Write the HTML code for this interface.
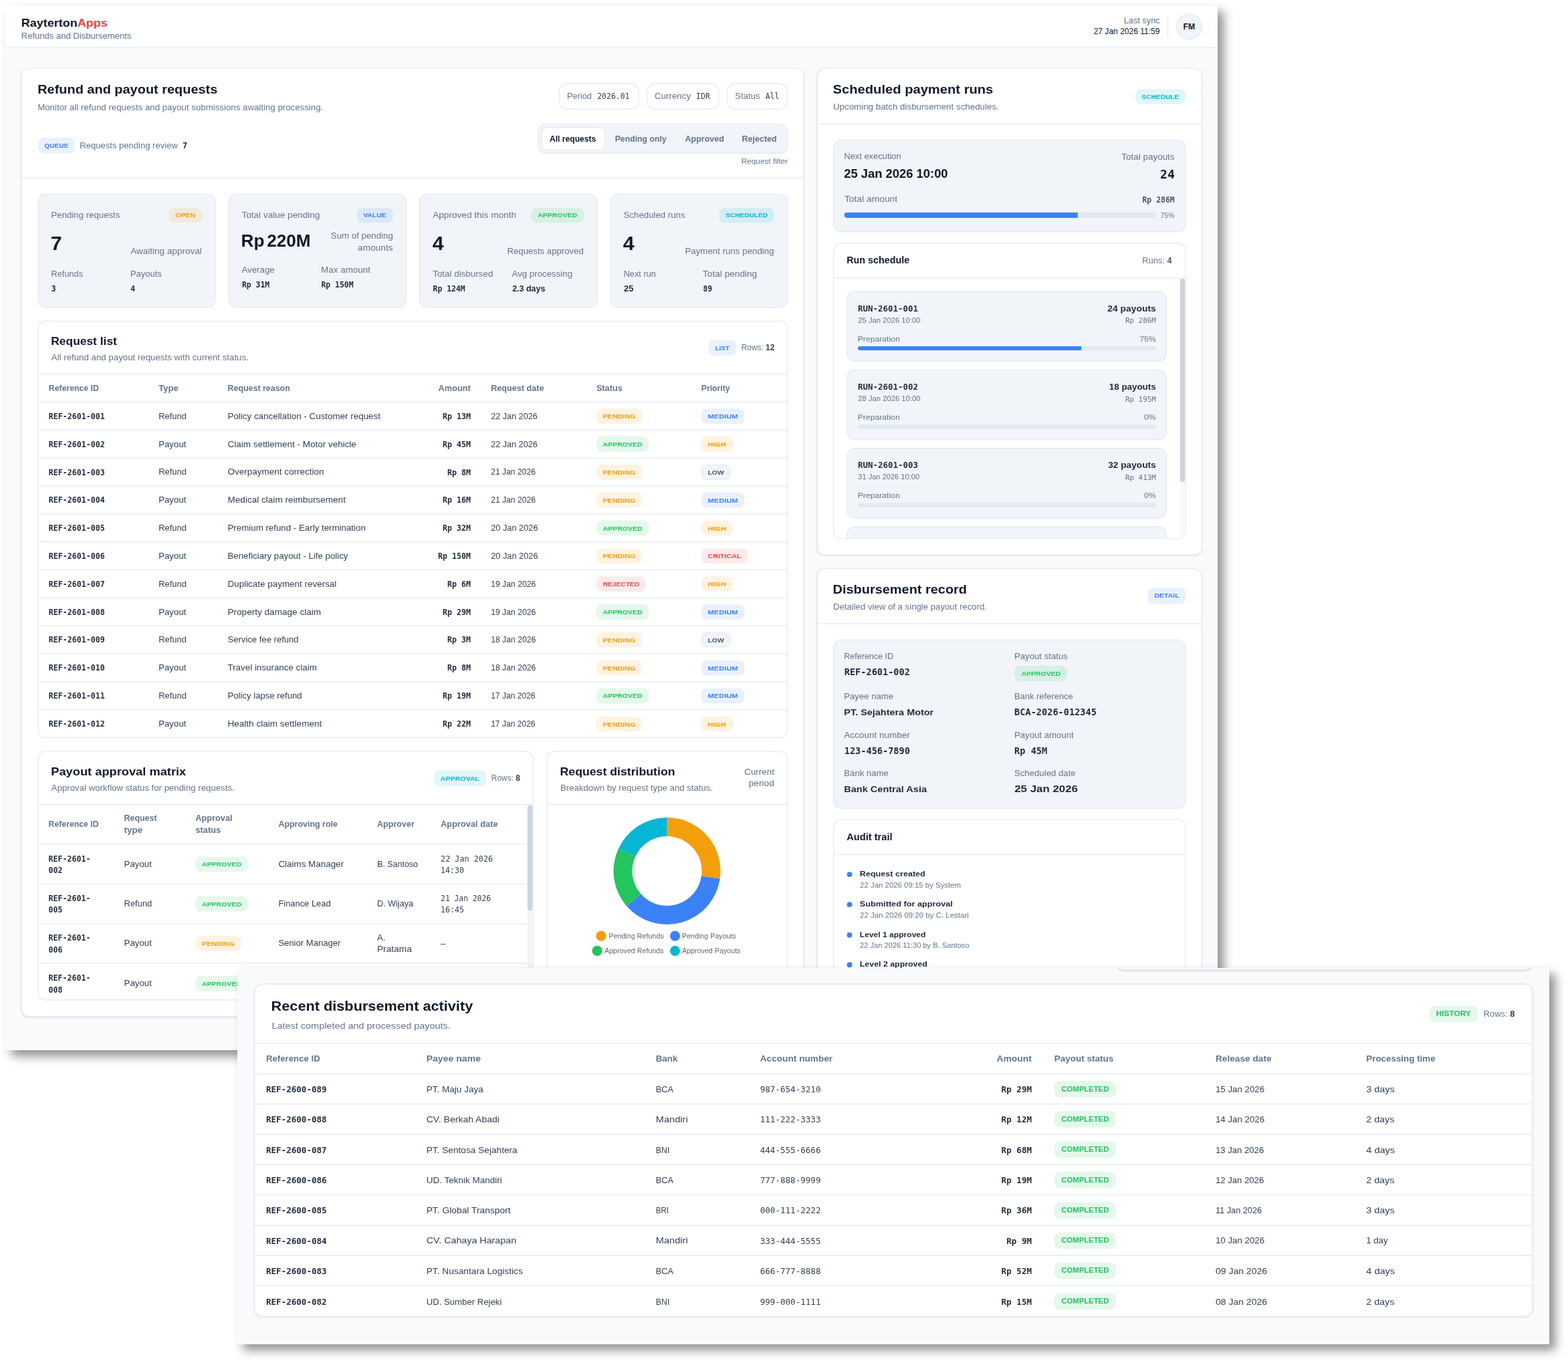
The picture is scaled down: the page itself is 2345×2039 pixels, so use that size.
<!DOCTYPE html>
<html lang="en"><head><meta charset="utf-8"><title>RaytertonApps - Refunds and Disbursements</title>
<style>
*{box-sizing:border-box;margin:0;padding:0}
html,body{width:2345px;height:2039px;background:#fff;overflow:hidden}
body{position:relative;font-family:"Liberation Sans",sans-serif;color:#334155;font-size:12px;line-height:1.3}
.mono{font-family:"DejaVu Sans Mono","Liberation Mono",monospace;font-size:10.25px;letter-spacing:0}
.b{font-weight:700;color:#1e293b}
.panel{position:absolute;background:#f8fafc;overflow:hidden;box-shadow:9px 9px 14px rgba(0,0,0,.43)}
.p1{left:8px;top:8px;width:1813px;height:1563px}
.p2{left:355px;top:1448px;width:1962px;height:563px}
.page{position:absolute;left:0;top:0;width:1600px;transform-origin:0 0;zoom:4;transform-style:preserve-3d}
.p1 .page{height:1380px;transform:translate(.075px,.125px) scale(0.2832)}
.p2 .page{height:460px;transform:scale(0.3065625)}

/* header */
.hdr{position:absolute;left:0;top:0;width:1600px;height:55.19px;background:#fff;border-bottom:1px solid #e2e8f0}
.logo{position:absolute;left:20.70px;top:12.43px;font-size:14.5px;line-height:20px;font-weight:700;color:#0f172a;white-space:nowrap}
.logo i{font-style:normal;color:#ef4444}
.bsub{position:absolute;left:20.65px;top:31.71px;font-size:11px;line-height:16px;color:#64748b;white-space:nowrap}
.s1{position:absolute;right:76.08px;top:11.93px;font-size:11px;line-height:16px;color:#64748b;white-space:nowrap}
.s2{position:absolute;right:76.08px;top:25.62px;font-size:11px;line-height:16px;color:#0f172a;white-space:nowrap}
.vdiv{position:absolute;left:1534.10px;top:12.45px;width:1px;height:30.81px;background:#e2e8f0}
.av{position:absolute;left:1545.26px;top:10.61px;width:34.4px;height:34.4px;border-radius:50%;background:#f1f5f9;border:1px solid #e2e8f0;font-size:10.5px;font-weight:700;color:#0f172a;text-align:center;line-height:32.4px}

/* cards */
.card{position:absolute;background:#fff;border:1px solid #e2e8f0;border-radius:10.5px;box-shadow:0 1px 2px rgba(15,23,42,.09)}
.card.in{box-shadow:none;overflow:hidden}
.A{ left:20.69px;top:82.48px;width:1033.57px;height:1252.94px }
.B{ left:1071.36px;top:82.48px;width:508.33px;height:643.21px }
.C{ left:1071.36px;top:742.70px;width:508.33px;height:751.00px }
.h1{font-size:16.2px;line-height:22px;font-weight:700;color:#0f172a;white-space:nowrap}
.h2{font-size:14px;line-height:20px;font-weight:700;color:#0f172a;white-space:nowrap}
.h3{font-size:12.4px;line-height:18px;font-weight:700;color:#0f172a;white-space:nowrap}
.sub{font-size:11px;line-height:16px;color:#64748b;white-space:nowrap}
.abs{position:absolute}
.fx{display:inline-block;transform-origin:0 50%;white-space:pre}
.av .fx{transform-origin:50% 50%}
.s1 .fx,.s2 .fx,.rf .fx,.t-note .fx,.cp .fx,.ra .fx,.rows .fx,.r .fx,.rl .c4 .fx,.hs .c5 .fx{transform-origin:100% 50%}

.chip{display:inline-block;height:20.9px;line-height:21.6px;padding:0 8.6px;border-radius:7px;font-size:8.4px;font-weight:700;letter-spacing:0;white-space:nowrap;vertical-align:middle;text-align:center;overflow:visible}
.chip .fx{transform-origin:50% 50%}
.chip.bd{height:20.1px;line-height:20.8px;margin-top:.4px}
.c-blue{background:rgba(59,130,246,.11);color:#3b82f6}
.c-orange{background:rgba(245,158,11,.12);color:#f59e0b}
.c-green{background:rgba(34,197,94,.12);color:#22c55e}
.c-cyan{background:rgba(6,182,212,.12);color:#06b6d4}
.c-red{background:rgba(239,68,68,.11);color:#ef4444}
.c-gray{background:#f1f5f9;color:#475569;border:1px solid #e2e8f0;line-height:18.8px !important;padding:0 7.6px}

/* card A header */
.ch{position:absolute;left:0;top:0;width:100%;height:144.51px;border-bottom:1px solid #e2e8f0}
.ch .h1{position:absolute;left:20.46px;top:16.34px}
.ch .sub{position:absolute;left:20.67px;top:42.77px}
.queue{position:absolute;left:21.30px;top:90.69px;white-space:nowrap;height:20.92px;line-height:20.92px}
.queue .chip{position:absolute;left:0;top:0;height:100%;line-height:inherit;width:48.38px;padding:0}
.q1{position:absolute;left:55.09px;top:0;font-size:11px;color:#64748b}
.q2{position:absolute;left:190.78px;top:0;font-size:10.6px}
.pill{position:absolute;border:1px solid #e2e8f0;border-radius:10.5px;font-size:11px;line-height:16px;color:#64748b;background:#fff;white-space:nowrap}
.pill>span,.pill>b{position:absolute;top:7.82px}
.pill b{font-weight:400;color:#334155;font-size:10.1px}
.pl1{ left:708.75px;top:19.04px;width:105.78px;height:34.81px }
.pl2{ left:824.65px;top:19.04px;width:95.63px;height:34.81px }
.pl3{ left:930.41px;top:19.04px;width:80.71px;height:34.81px }
.pl1>span{left:9.82px} .pl1>b{left:49.76px}
.pl2>span{left:9.65px} .pl2>b{left:64.41px}
.pl3>span{left:9.82px} .pl3>b{left:50.02px}
.seg{position:absolute;left:681.03px;top:72.18px;width:330.10px;height:39.93px;background:#f1f5f9;border:1px solid #e2e8f0;border-radius:10.5px;white-space:nowrap;font-size:10.8px;font-weight:700;color:#64748b}
.seg u{position:absolute;left:3.59px;top:3.68px;width:84.33px;height:30.66px;background:#fff;border:1px solid #e2e8f0;border-radius:8px}
.seg>span{position:absolute;top:10.93px;line-height:16px}
.seg>span.on{color:#0f172a}
.seg>span:nth-of-type(1){left:14.51px}
.seg>span:nth-of-type(2){left:100.76px}
.seg>span:nth-of-type(3){left:193.41px}
.seg>span:nth-of-type(4){left:268.40px}
.rf{position:absolute;right:20.51px;top:114.87px;font-size:10.4px;line-height:14px;color:#64748b;white-space:nowrap}

/* tiles */
.tile{position:absolute;background:#f1f5f9;border:1px solid #e2e8f0;border-radius:10.5px}
.tl0{ left:20.80px;top:164.70px;width:234.85px;height:150.89px } .tl1{ left:272.48px;top:164.70px;width:235.46px;height:150.89px } .tl2{ left:524.60px;top:164.70px;width:235.11px;height:150.89px } .tl3{ left:776.54px;top:164.70px;width:234.58px;height:150.89px }
.t-label{font-size:11px;line-height:16px;color:#64748b;white-space:nowrap}
.tile>.t-label{position:absolute;left:16.71px;top:19.47px}
.tile>.chip{position:absolute;right:17.24px;top:17.77px;height:19.77px;line-height:19.77px}
.t-big{position:absolute;left:17.69px;font-weight:700;color:#0f172a;white-space:nowrap}
.big1{font-size:26px;line-height:32px;top:48.56px;margin-left:-1.6px}
.big2{font-size:23.3px;line-height:28px;top:47.08px;margin-left:-1.8px;word-spacing:-3px}
.t-note{position:absolute;right:17.16px;top:67.50px;font-size:11px;line-height:15.45px;color:#64748b;text-align:right;white-space:nowrap}
.tl1 .t-note{top:47.20px}
.t-sub{position:absolute;left:16.71px;top:96.80px;width:220px}
.tl1 .t-sub{top:91.68px}
.t-sub>div{position:absolute;left:0;top:0}
.t-sub>div+div{left:104.61px}
.t-sl{font-size:11px;line-height:16px;color:#64748b;white-space:nowrap}
.t-sv{position:absolute;left:.3px;top:19.83px;font-size:10.1px;line-height:16px;font-weight:700;color:#1e293b;white-space:nowrap}
.t-sv.sv-s{font-family:"Liberation Sans",sans-serif;font-size:10.8px;top:19.58px}

/* inner card header */
.ch2{position:relative;border-bottom:1px solid #e2e8f0}
.RL .ch2{height:70.18px}
.PM .ch2,.RD .ch2{height:70.27px}
.ch2 .h2{position:absolute;left:16.60px;top:16.16px}
.ch2 .sub{position:absolute;left:16.92px;top:39.95px}
.ch2-r{position:absolute;right:16.6px;top:24.57px;height:20.9px;white-space:nowrap;line-height:20.9px}
.ch2-r .chip{vertical-align:top}
.rows{margin-left:7px;font-size:10.5px;color:#64748b;vertical-align:top}
.rows b{color:#334155;font-weight:700}
.rows b.nb{font-weight:400;color:#64748b}
.cp{position:absolute;right:16.89px;top:19.30px;text-align:right;font-size:11px;line-height:15.1px;color:#64748b}

.RL{ left:20.80px;top:332.42px;width:990.32px;height:551.14px }
.PM{ left:20.80px;top:900.75px;width:654.43px;height:329.21px }
.RD{ left:692.77px;top:900.75px;width:318.36px;height:329.21px }

/* tables */
.tbl{position:relative}
.tr{position:relative;height:36.93px;border-bottom:1px solid #e2e8f0;font-size:11px;color:#334155}
.tr:last-child{border-bottom:0}
.tr>span{position:absolute;top:0;height:100%;display:flex;align-items:center;white-space:nowrap}
.tr.th{font-weight:700;color:#64748b;font-size:10.6px}
.tr .mono{font-size:10.25px;padding-top:1.3px}
.rl .tr.th{height:36.86px}
.rl .c1{left:13.5px}.rl .c2{left:158.5px}.rl .c3{left:249.8px}.rl .c4{right:417.70px}.rl .c5{left:597.2px}.rl .c6{left:736.5px}.rl .c7{left:875.0px}
.pm .tr{height:52.35px;line-height:15.6px}
.pm .tr.th{height:52.44px}
.pm .tr>span{white-space:nowrap;flex-direction:column;justify-content:center;align-items:flex-start}
.pm em{display:block;font-style:normal}
.pm .c1{left:13.3px}.pm .c2{left:113px}.pm .c3{left:207.2px}.pm .c4{left:316.8px}.pm .c5{left:447.1px}.pm .c6{left:531px}
.pmwrap{position:relative;height:258px;overflow:hidden}
.sbar{position:absolute;right:0;top:0;width:7px;height:100%;background:#f1f5f9}
.sbar i{position:absolute;left:0;top:0;width:7px;height:139.5px;border-radius:4px;background:#cbd5e1}

/* donut */
.donut{position:absolute;left:85.78px;top:85.43px}
.lg{position:absolute;left:0;width:100%;height:14px;font-size:9.45px;color:#666;line-height:14px;white-space:nowrap}
.lg i{position:absolute;top:.3px;width:13.4px;height:13.4px;border-radius:50%;margin-left:-.2px}
.lg>span{position:absolute;top:0}
.l1{top:236.23px}
.l2{top:255.92px}
.l1 i:nth-of-type(1){left:64.24px}
.l1>span:nth-of-type(1){left:81.07px}
.l1 i:nth-of-type(2){left:161.87px}
.l1>span:nth-of-type(2){left:177.64px}
.l2 i:nth-of-type(1){left:59.03px}
.l2>span:nth-of-type(1){left:75.24px}
.l2 i:nth-of-type(2){left:161.87px}
.l2>span:nth-of-type(2){left:177.64px}

/* card B */
.chb{position:absolute;left:0;top:0;width:100%;height:73.18px;border-bottom:1px solid #e2e8f0}
.C .chb{height:73.09px}
.chb .h1{position:absolute;left:19.84px;top:16.08px}
.chb .sub{position:absolute;left:20.14px;top:42.33px}
.C .chb .h1{top:16.08px}
.C .chb .sub{top:42.33px}
.chb>.chip{position:absolute;right:20.69px;top:26.78px;height:19.86px;line-height:19.86px}
.C .chb>.chip{top:24.92px;height:21.63px;line-height:21.63px}
.NE{ left:20.27px;top:93.54px;width:465.69px;height:122.03px }
.NE>span{position:absolute;white-space:nowrap}
.NE>.ne1{left:13.35px;top:13.11px}
.ne-v{font-size:15.6px;line-height:22px;font-weight:700;color:#0f172a}
.NE>.ne2{left:13.25px;top:33.59px}
.NE>.ne3{left:auto;right:14.07px;top:13.47px}
.NE>.ne4{right:13.71px;top:33.54px;font-size:16px;line-height:22px;color:#0f172a}
.NE>.ne5{left:13.75px;top:69.17px}
.NE>.ne6{right:13.89px;top:70.45px;font-size:10.1px;line-height:16px;color:#475569}
.NE>.ne7{position:absolute;left:13.54px;top:95.10px;width:411.02px;height:7.15px}
.NE>.ne8{right:13.98px;top:91.77px;font-size:9.8px;line-height:14px;color:#64748b}
.bar{border-radius:4px;background:#e2e8f0;overflow:hidden}
.bar i{display:block;height:100%;background:#3b82f6}

.RS{ left:20.27px;top:229.58px;width:465.69px;height:391.18px }
.ch3{position:relative;height:46.17px;border-bottom:1px solid #e2e8f0}
.AT .ch3{height:46.26px}
.ch3 .h3{position:absolute;left:16.79px;top:13.11px}
.AT .ch3 .h3{top:13.46px}
.runs{position:absolute;right:17.51px;top:14.51px;line-height:16px;font-size:10.8px;color:#64748b;white-space:nowrap}
.runs b{color:#475569;font-weight:700}
.run{position:absolute;background:#f1f5f9;border:1px solid #e2e8f0;border-radius:10.5px}
.rn0{ left:16.83px;top:62.91px;width:422.79px;height:93.16px } .rn1{ left:16.83px;top:166.42px;width:422.79px;height:93.16px } .rn2{ left:16.83px;top:269.92px;width:422.79px;height:93.16px } .rn3{ left:16.83px;top:373.43px;width:422.79px;height:93.16px }
.run>span{position:absolute;white-space:nowrap}
.run-id{left:13.82px;top:14.58px;font-size:11px !important;line-height:15px}
.run-date{left:13.92px;top:29.65px;font-size:10.2px;line-height:15px;color:#64748b}
.run-n{right:13.62px;top:14.58px;font-size:11px;line-height:15px;font-weight:700;color:#1e293b}
.run-amt{right:13.45px;top:30.43px;font-size:9.6px !important;line-height:15px;color:#64748b}
.run-p{left:13.62px;top:54.91px;font-size:10.2px;line-height:14px;color:#64748b}
.run-pc{right:13.62px;top:54.91px;font-size:10.2px;line-height:14px;color:#64748b}
.run .bar{position:absolute;left:13.71px;top:71.89px;width:393.54px;height:5.38px}
.sbar2{position:absolute;left:457.13px;top:46.17px;width:6.18px;bottom:0;background:#f8fafc}
.sbar2 i{position:absolute;left:0;top:0;width:100%;height:269.07px;border-radius:4px;background:#cbd5e1}

/* card C */
.DT{ left:20.27px;top:93.28px;width:465.69px;height:223.46px }
.DT>span{position:absolute;white-space:nowrap}
.DT>.dl{left:13.35px}
.DT>.dl.c2x{left:238.11px}
.DT>.fv{left:13.73px;font-size:12px;line-height:18px;color:#1e293b}
.DT>.fv.c2x{left:238.31px}
.DT>.fv.mono{font-size:12px}
.DT>.fv.fs{font-weight:700;font-size:11.8px;left:13.25px}
.DT>.fv.fd{font-size:12.8px;left:238.31px}
.DT>.dl.r1{top:13.11px} .DT>.r1v{top:33.31px}
.DT>.dl.r2{top:66.61px} .DT>.r2v{top:85.92px}
.DT>.dl.r3{top:117.19px} .DT>.r3v{top:137.30px}
.DT>.dl.r4{top:167.86px} .DT>.r4v{top:187.44px}
.DT>.chip{position:absolute;left:238.64px;top:34.10px;height:19.91px;line-height:19.91px;width:69.39px;padding:0}
.AT{ left:20.27px;top:330.48px;width:465.69px;height:242.97px }
.au{position:absolute;left:17.10px;top:0}
.au0{top:74.62px} .au1{top:114.39px} .au2{top:154.69px} .au3{top:193.93px}
.au i{position:absolute;left:0;top:-6.10px;width:7px;height:7px;border-radius:50%;background:#3b82f6}
.au-t{position:absolute;left:17.00px;top:-11.10px;font-size:10.4px;line-height:15px;font-weight:700;color:#1e293b;white-space:nowrap}
.au-s{position:absolute;left:17.20px;top:4.14px;font-size:10px;line-height:14px;color:#64748b;white-space:nowrap}

/* panel 2 */
.sliver{position:absolute;left:1071.36px;top:-40px;width:508.33px;height:42.62px;background:#fff;border:1px solid #e2e8f0;border-radius:10.5px;box-shadow:0 1px 2.5px rgba(15,23,42,.14)}
.H{ left:20.62px;top:19.32px;width:1559.41px;height:406.22px;overflow:hidden}
.H .ch2{height:72.42px}
.H .h1{position:absolute;left:19.75px;top:15.51px}
.H .sub{position:absolute;left:20.28px;top:42.08px}
.H .ch2-r{right:21.19px;top:25.92px;height:19.98px;line-height:19.98px}
.H .ch2-r .chip{height:19.98px;line-height:19.98px}
.hs .tr{height:36.95px}
.hs .tr.th{height:36.94px}
.hs .c1{left:13.35px}.hs .c2{left:208.85px}.hs .c3{left:488.57px}.hs .c4{left:615.84px}.hs .c5{right:610.21px}.hs .c6{left:974.67px}.hs .c7{left:1171.27px}.hs .c8{left:1355.09px}
.hs .chip.bd{height:20px;line-height:20px}

</style></head>
<body>
<div class="panel p1"><div class="page">
<div class="hdr">
  <div class="logo"><span class="fx nofit" style="transform:scaleX(1.095)">Rayterton<i>Apps</i></span></div><div class="bsub"><span class="fx" style="transform:scaleX(1.0457)">Refunds and Disbursements</span></div>
  <div class="s1"><span class="fx" style="transform:scaleX(1.0257)">Last sync</span></div><div class="s2"><span class="fx" style="transform:scaleX(0.9661)">27 Jan 2026 11:59</span></div><div class="vdiv"></div><div class="av"><span class="fx" style="transform:scaleX(1.03)">FM</span></div>
</div>
<div class="card A">
  <div class="ch">
    <div class="h1"><span class="fx" style="transform:scaleX(1.0865)">Refund and payout requests</span></div><div class="sub"><span class="fx" style="transform:scaleX(1.065)">Monitor all refund requests and payout submissions awaiting processing.</span></div>
    <div class="queue"><span class="chip c-blue "><span class="fx" style="transform:scaleX(1.0647);margin:0 0.95px">QUEUE</span></span><span class="q1"><span class="fx" style="transform:scaleX(1.0471)">Requests pending review</span></span><span class="q2 mono b">7</span></div>
    <div class="pill pl1"><span class="fx" id="fx-pill-0" style="transform:scaleX(1.0271)">Period</span><b class="mono">2026.01</b></div><div class="pill pl2"><span class="fx" id="fx-pill-1" style="transform:scaleX(1.0669)">Currency</span><b class="mono">IDR</b></div><div class="pill pl3"><span class="fx" id="fx-pill-2" style="transform:scaleX(1.0593)">Status</span><b class="mono">All</b></div>
    <div class="seg"><u></u><span class="on"><span class="fx" style="transform:scaleX(0.9905)">All requests</span></span><span><span class="fx" style="transform:scaleX(1.0049)">Pending only</span></span><span><span class="fx" style="transform:scaleX(1.0262)">Approved</span></span><span><span class="fx" style="transform:scaleX(1.0274)">Rejected</span></span></div>
    <div class="rf"><span class="fx" style="transform:scaleX(1.0018)">Request filter</span></div>
  </div>
  <div class="tile tl0">
  <span class="t-label"><span class="fx" style="transform:scaleX(1.0602)">Pending requests</span></span><span class="chip c-orange "><span class="fx" style="transform:scaleX(1.107);margin:0 1.24px">OPEN</span></span>
  <span class="t-big big1"><span class="fx" style="transform:scaleX(1.03)">7</span></span><span class="t-note"><span class="fx" style="transform:scaleX(1.0867)">Awaiting approval</span></span>
  <div class="t-sub"><div><div class="t-sl"><span class="fx" style="transform:scaleX(1.0232)">Refunds</span></div><div class="t-sv mono">3</div></div><div><div class="t-sl"><span class="fx" style="transform:scaleX(1.0396)">Payouts</span></div><div class="t-sv mono">4</div></div></div>
</div><div class="tile tl1">
  <span class="t-label"><span class="fx" style="transform:scaleX(1.0891)">Total value pending</span></span><span class="chip c-blue "><span class="fx" style="transform:scaleX(1.0986);margin:0 1.34px">VALUE</span></span>
  <span class="t-big big2"><span class="fx" style="transform:scaleX(0.9895)">Rp 220M</span></span><span class="t-note"><span class="fx" style="transform:scaleX(1.0646)">Sum of pending</span><br><span class="fx" style="transform:scaleX(1.1082)">amounts</span></span>
  <div class="t-sub"><div><div class="t-sl"><span class="fx" style="transform:scaleX(1.0659)">Average</span></div><div class="t-sv mono">Rp 31M</div></div><div><div class="t-sl"><span class="fx" style="transform:scaleX(1.0769)">Max amount</span></div><div class="t-sv mono">Rp 150M</div></div></div>
</div><div class="tile tl2">
  <span class="t-label"><span class="fx" style="transform:scaleX(1.0919)">Approved this month</span></span><span class="chip c-green "><span class="fx" style="transform:scaleX(1.1043);margin:0 2.43px">APPROVED</span></span>
  <span class="t-big big1"><span class="fx" style="transform:scaleX(1.03)">4</span></span><span class="t-note"><span class="fx" style="transform:scaleX(1.0581)">Requests approved</span></span>
  <div class="t-sub"><div><div class="t-sl"><span class="fx" style="transform:scaleX(1.0757)">Total disbursed</span></div><div class="t-sv mono">Rp 124M</div></div><div><div class="t-sl"><span class="fx" style="transform:scaleX(1.0643)">Avg processing</span></div><div class="t-sv sv-s"><span class="fx" style="transform:scaleX(1.0208)">2.3 days</span></div></div></div>
</div><div class="tile tl3">
  <span class="t-label"><span class="fx" style="transform:scaleX(1.0605)">Scheduled runs</span></span><span class="chip c-cyan "><span class="fx" style="transform:scaleX(1.0597);margin:0 1.54px">SCHEDULED</span></span>
  <span class="t-big big1"><span class="fx" style="transform:scaleX(1.03)">4</span></span><span class="t-note"><span class="fx" style="transform:scaleX(1.0684)">Payment runs pending</span></span>
  <div class="t-sub"><div><div class="t-sl"><span class="fx" style="transform:scaleX(1.023)">Next run</span></div><div class="t-sv sv-s"><span class="fx" style="transform:scaleX(1.0595)">25</span></div></div><div><div class="t-sl"><span class="fx" style="transform:scaleX(1.0949)">Total pending</span></div><div class="t-sv mono">89</div></div></div>
</div>
  <div class="card in RL">
    <div class="ch2"><div class="h2"><span class="fx" style="transform:scaleX(1.0971)">Request list</span></div><div class="sub"><span class="fx" style="transform:scaleX(1.0645)">All refund and payout requests with current status.</span></div><div class="ch2-r"><span class="chip c-blue "><span class="fx" style="transform:scaleX(1.0533);margin:0 0.47px">LIST</span></span><span class="rows nofit">Rows: <b>12</b></span></div></div>
    <div class="tbl rl"><div class="tr th"><span class="c1"><span class="fx" style="transform:scaleX(1.0213)">Reference ID</span></span><span class="c2"><span class="fx" style="transform:scaleX(1.0917)">Type</span></span><span class="c3"><span class="fx" style="transform:scaleX(1.0355)">Request reason</span></span><span class="c4"><span class="fx" style="transform:scaleX(1.0651)">Amount</span></span><span class="c5"><span class="fx" style="transform:scaleX(1.0517)">Request date</span></span><span class="c6"><span class="fx" style="transform:scaleX(1.0599)">Status</span></span><span class="c7"><span class="fx" style="transform:scaleX(1.0172)">Priority</span></span></div><div class="tr"><span class="c1 mono b">REF-2601-001</span><span class="c2"><span class="fx" style="transform:scaleX(1.0379)">Refund</span></span><span class="c3"><span class="fx" style="transform:scaleX(1.0744)">Policy cancellation - Customer request</span></span><span class="c4 mono b">Rp 13M</span><span class="c5"><span class="fx" style="transform:scaleX(1.0144)">22 Jan 2026</span></span><span class="c6"><span class="chip c-orange bd"><span class="fx" style="transform:scaleX(1.1274);margin:0 2.4px">PENDING</span></span></span><span class="c7"><span class="chip c-blue bd"><span class="fx" style="transform:scaleX(1.1689);margin:0 2.83px">MEDIUM</span></span></span></div><div class="tr"><span class="c1 mono b">REF-2601-002</span><span class="c2"><span class="fx" style="transform:scaleX(1.0654)">Payout</span></span><span class="c3"><span class="fx" style="transform:scaleX(1.0808)">Claim settlement - Motor vehicle</span></span><span class="c4 mono b">Rp 45M</span><span class="c5"><span class="fx" style="transform:scaleX(1.0144)">22 Jan 2026</span></span><span class="c6"><span class="chip c-green bd"><span class="fx" style="transform:scaleX(1.1043);margin:0 2.43px">APPROVED</span></span></span><span class="c7"><span class="chip c-orange bd"><span class="fx" style="transform:scaleX(1.1597);margin:0 1.63px">HIGH</span></span></span></div><div class="tr"><span class="c1 mono b">REF-2601-003</span><span class="c2"><span class="fx" style="transform:scaleX(1.0379)">Refund</span></span><span class="c3"><span class="fx" style="transform:scaleX(1.084)">Overpayment correction</span></span><span class="c4 mono b">Rp 8M</span><span class="c5"><span class="fx" style="transform:scaleX(0.9745)">21 Jan 2026</span></span><span class="c6"><span class="chip c-orange bd"><span class="fx" style="transform:scaleX(1.1274);margin:0 2.4px">PENDING</span></span></span><span class="c7"><span class="chip c-gray bd"><span class="fx" style="transform:scaleX(1.1015);margin:0 0.96px">LOW</span></span></span></div><div class="tr"><span class="c1 mono b">REF-2601-004</span><span class="c2"><span class="fx" style="transform:scaleX(1.0654)">Payout</span></span><span class="c3"><span class="fx" style="transform:scaleX(1.0889)">Medical claim reimbursement</span></span><span class="c4 mono b">Rp 16M</span><span class="c5"><span class="fx" style="transform:scaleX(0.9745)">21 Jan 2026</span></span><span class="c6"><span class="chip c-orange bd"><span class="fx" style="transform:scaleX(1.1274);margin:0 2.4px">PENDING</span></span></span><span class="c7"><span class="chip c-blue bd"><span class="fx" style="transform:scaleX(1.1689);margin:0 2.83px">MEDIUM</span></span></span></div><div class="tr"><span class="c1 mono b">REF-2601-005</span><span class="c2"><span class="fx" style="transform:scaleX(1.0379)">Refund</span></span><span class="c3"><span class="fx" style="transform:scaleX(1.0679)">Premium refund - Early termination</span></span><span class="c4 mono b">Rp 32M</span><span class="c5"><span class="fx" style="transform:scaleX(1.0262)">20 Jan 2026</span></span><span class="c6"><span class="chip c-green bd"><span class="fx" style="transform:scaleX(1.1043);margin:0 2.43px">APPROVED</span></span></span><span class="c7"><span class="chip c-orange bd"><span class="fx" style="transform:scaleX(1.1597);margin:0 1.63px">HIGH</span></span></span></div><div class="tr"><span class="c1 mono b">REF-2601-006</span><span class="c2"><span class="fx" style="transform:scaleX(1.0654)">Payout</span></span><span class="c3"><span class="fx" style="transform:scaleX(1.0647)">Beneficiary payout - Life policy</span></span><span class="c4 mono b">Rp 150M</span><span class="c5"><span class="fx" style="transform:scaleX(1.0262)">20 Jan 2026</span></span><span class="c6"><span class="chip c-orange bd"><span class="fx" style="transform:scaleX(1.1274);margin:0 2.4px">PENDING</span></span></span><span class="c7"><span class="chip c-red bd"><span class="fx" style="transform:scaleX(1.1279);margin:0 2.47px">CRITICAL</span></span></span></div><div class="tr"><span class="c1 mono b">REF-2601-007</span><span class="c2"><span class="fx" style="transform:scaleX(1.0379)">Refund</span></span><span class="c3"><span class="fx" style="transform:scaleX(1.0785)">Duplicate payment reversal</span></span><span class="c4 mono b">Rp 6M</span><span class="c5"><span class="fx" style="transform:scaleX(0.9804)">19 Jan 2026</span></span><span class="c6"><span class="chip c-red bd"><span class="fx" style="transform:scaleX(1.0707);margin:0 1.56px">REJECTED</span></span></span><span class="c7"><span class="chip c-orange bd"><span class="fx" style="transform:scaleX(1.1597);margin:0 1.63px">HIGH</span></span></span></div><div class="tr"><span class="c1 mono b">REF-2601-008</span><span class="c2"><span class="fx" style="transform:scaleX(1.0654)">Payout</span></span><span class="c3"><span class="fx" style="transform:scaleX(1.0892)">Property damage claim</span></span><span class="c4 mono b">Rp 29M</span><span class="c5"><span class="fx" style="transform:scaleX(0.9804)">19 Jan 2026</span></span><span class="c6"><span class="chip c-green bd"><span class="fx" style="transform:scaleX(1.1043);margin:0 2.43px">APPROVED</span></span></span><span class="c7"><span class="chip c-blue bd"><span class="fx" style="transform:scaleX(1.1689);margin:0 2.83px">MEDIUM</span></span></span></div><div class="tr"><span class="c1 mono b">REF-2601-009</span><span class="c2"><span class="fx" style="transform:scaleX(1.0379)">Refund</span></span><span class="c3"><span class="fx" style="transform:scaleX(1.0493)">Service fee refund</span></span><span class="c4 mono b">Rp 3M</span><span class="c5"><span class="fx" style="transform:scaleX(0.9804)">18 Jan 2026</span></span><span class="c6"><span class="chip c-orange bd"><span class="fx" style="transform:scaleX(1.1274);margin:0 2.4px">PENDING</span></span></span><span class="c7"><span class="chip c-gray bd"><span class="fx" style="transform:scaleX(1.1015);margin:0 0.96px">LOW</span></span></span></div><div class="tr"><span class="c1 mono b">REF-2601-010</span><span class="c2"><span class="fx" style="transform:scaleX(1.0654)">Payout</span></span><span class="c3"><span class="fx" style="transform:scaleX(1.0736)">Travel insurance claim</span></span><span class="c4 mono b">Rp 8M</span><span class="c5"><span class="fx" style="transform:scaleX(0.9804)">18 Jan 2026</span></span><span class="c6"><span class="chip c-orange bd"><span class="fx" style="transform:scaleX(1.1274);margin:0 2.4px">PENDING</span></span></span><span class="c7"><span class="chip c-blue bd"><span class="fx" style="transform:scaleX(1.1689);margin:0 2.83px">MEDIUM</span></span></span></div><div class="tr"><span class="c1 mono b">REF-2601-011</span><span class="c2"><span class="fx" style="transform:scaleX(1.0379)">Refund</span></span><span class="c3"><span class="fx" style="transform:scaleX(1.0554)">Policy lapse refund</span></span><span class="c4 mono b">Rp 19M</span><span class="c5"><span class="fx" style="transform:scaleX(0.9686)">17 Jan 2026</span></span><span class="c6"><span class="chip c-green bd"><span class="fx" style="transform:scaleX(1.1043);margin:0 2.43px">APPROVED</span></span></span><span class="c7"><span class="chip c-blue bd"><span class="fx" style="transform:scaleX(1.1689);margin:0 2.83px">MEDIUM</span></span></span></div><div class="tr"><span class="c1 mono b">REF-2601-012</span><span class="c2"><span class="fx" style="transform:scaleX(1.0654)">Payout</span></span><span class="c3"><span class="fx" style="transform:scaleX(1.0868)">Health claim settlement</span></span><span class="c4 mono b">Rp 22M</span><span class="c5"><span class="fx" style="transform:scaleX(0.9686)">17 Jan 2026</span></span><span class="c6"><span class="chip c-orange bd"><span class="fx" style="transform:scaleX(1.1274);margin:0 2.4px">PENDING</span></span></span><span class="c7"><span class="chip c-orange bd"><span class="fx" style="transform:scaleX(1.1597);margin:0 1.63px">HIGH</span></span></span></div></div>
  </div>
  <div class="card in PM">
    <div class="ch2"><div class="h2"><span class="fx" style="transform:scaleX(1.1516)">Payout approval matrix</span></div><div class="sub"><span class="fx" style="transform:scaleX(1.0599)">Approval workflow status for pending requests.</span></div><div class="ch2-r"><span class="chip c-cyan "><span class="fx" style="transform:scaleX(1.1173);margin:0 2.66px">APPROVAL</span></span><span class="rows nofit">Rows: <b>8</b></span></div></div>
    <div class="pmwrap"><div class="tbl pm"><div class="tr th"><span class="c1"><span class="fx" style="transform:scaleX(1.0213)">Reference ID</span></span><span class="c2"><em><span class="fx" style="transform:scaleX(1.0339)">Request</span></em><em><span class="fx" style="transform:scaleX(1.1239)">type</span></em></span><span class="c3"><em><span class="fx" style="transform:scaleX(1.0607)">Approval</span></em><em><span class="fx" style="transform:scaleX(1.069)">status</span></em></span><span class="c4"><span class="fx" style="transform:scaleX(1.0374)">Approving role</span></span><span class="c5"><span class="fx" style="transform:scaleX(1.0489)">Approver</span></span><span class="c6"><span class="fx" style="transform:scaleX(1.068)">Approval date</span></span></div><div class="tr"><span class="c1 mono b"><em>REF-2601-</em><em>002</em></span><span class="c2"><span class="fx" style="transform:scaleX(1.0654)">Payout</span></span><span class="c3"><span class="chip c-green bd"><span class="fx" style="transform:scaleX(1.1043);margin:0 2.43px">APPROVED</span></span></span><span class="c4"><span class="fx" style="transform:scaleX(1.0762)">Claims Manager</span></span><span class="c5"><span class="fx" style="transform:scaleX(1.0018)">B. Santoso</span></span><span class="c6 mono"><em><span class="fx" style="transform:scaleX(1.0144)">22 Jan 2026</span></em><em>14:30</em></span></div><div class="tr"><span class="c1 mono b"><em>REF-2601-</em><em>005</em></span><span class="c2"><span class="fx" style="transform:scaleX(1.0379)">Refund</span></span><span class="c3"><span class="chip c-green bd"><span class="fx" style="transform:scaleX(1.1043);margin:0 2.43px">APPROVED</span></span></span><span class="c4"><span class="fx" style="transform:scaleX(1.0356)">Finance Lead</span></span><span class="c5"><span class="fx" style="transform:scaleX(1.0145)">D. Wijaya</span></span><span class="c6 mono"><em><span class="fx" style="transform:scaleX(0.9745)">21 Jan 2026</span></em><em>16:45</em></span></div><div class="tr"><span class="c1 mono b"><em>REF-2601-</em><em>006</em></span><span class="c2"><span class="fx" style="transform:scaleX(1.0654)">Payout</span></span><span class="c3"><span class="chip c-orange bd"><span class="fx" style="transform:scaleX(1.1274);margin:0 2.4px">PENDING</span></span></span><span class="c4"><span class="fx" style="transform:scaleX(1.0479)">Senior Manager</span></span><span class="c5"><em><span class="fx" style="transform:scaleX(1.06)">A.</span></em><em><span class="fx" style="transform:scaleX(1.1012)">Pratama</span></em></span><span class="c6 mono">&ndash;</span></div><div class="tr"><span class="c1 mono b"><em>REF-2601-</em><em>008</em></span><span class="c2"><span class="fx" style="transform:scaleX(1.0654)">Payout</span></span><span class="c3"><span class="chip c-green bd"><span class="fx" style="transform:scaleX(1.1043);margin:0 2.43px">APPROVED</span></span></span><span class="c4"><span class="fx" style="transform:scaleX(1.06)">Operations Head</span></span><span class="c5"><span class="fx" style="transform:scaleX(1.06)">E. Hartono</span></span><span class="c6 mono"><em><span class="fx" style="transform:scaleX(0.9804)">19 Jan 2026</span></em><em>10:05</em></span></div></div><div class="sbar"><i></i></div></div>
  </div>
  <div class="card in RD">
    <div class="ch2"><div class="h2"><span class="fx" style="transform:scaleX(1.1158)">Request distribution</span></div><div class="sub"><span class="fx" style="transform:scaleX(1.0585)">Breakdown by request type and status.</span></div><div class="cp r"><span class="fx" style="transform:scaleX(1.0792)">Current</span><br><span class="fx" style="transform:scaleX(1.1046)">period</span></div></div>
    <svg class="donut" width="144" height="144" viewBox="0 0 144 144"><path d="M72.00 1.40A70.6 70.6 0 0 1 141.88 82.05L117.43 78.53A45.9 45.9 0 0 0 72.00 26.10Z" fill="#f59e0b"/><path d="M141.88 82.05A70.6 70.6 0 0 1 18.64 118.23L37.31 102.06A45.9 45.9 0 0 0 117.43 78.53Z" fill="#3b82f6"/><path d="M18.64 118.23A70.6 70.6 0 0 1 7.78 42.67L30.25 52.93A45.9 45.9 0 0 0 37.31 102.06Z" fill="#22c55e"/><path d="M7.78 42.67A70.6 70.6 0 0 1 72.00 1.40L72.00 26.10A45.9 45.9 0 0 0 30.25 52.93Z" fill="#06b6d4"/></svg>
    <div class="lg l1"><i style="background:#f59e0b"></i><span>Pending Refunds</span><i style="background:#3b82f6"></i><span>Pending Payouts</span></div>
    <div class="lg l2"><i style="background:#22c55e"></i><span>Approved Refunds</span><i style="background:#06b6d4"></i><span>Approved Payouts</span></div>
  </div>
</div>
<div class="card B">
  <div class="chb"><div class="h1"><span class="fx" style="transform:scaleX(1.0985)">Scheduled payment runs</span></div><div class="sub"><span class="fx" style="transform:scaleX(1.0717)">Upcoming batch disbursement schedules.</span></div><span class="chip c-cyan "><span class="fx" style="transform:scaleX(1.0708);margin:0 1.61px">SCHEDULE</span></span></div>
  <div class="tile NE">
    <span class="t-label ne1"><span class="fx" style="transform:scaleX(1.0361)">Next execution</span></span><span class="ne-v ne2"><span class="fx" style="transform:scaleX(1.0399)">25 Jan 2026 10:00</span></span>
    <span class="t-label ne3 r"><span class="fx" style="transform:scaleX(1.0792)">Total payouts</span></span><span class="mono b ne4">24</span>
    <span class="t-label ne5"><span class="fx" style="transform:scaleX(1.111)">Total amount</span></span><span class="mono b ne6">Rp 286M</span>
    <div class="bar ne7"><i style="width:75%"></i></div><span class="ne8 r"><span class="fx" style="transform:scaleX(0.947)">75%</span></span>
  </div>
  <div class="card in RS">
    <div class="ch3"><div class="h3"><span class="fx" style="transform:scaleX(1.0197)">Run schedule</span></div><span class="runs r"><span class="fx" style="transform:scaleX(1.06)">Runs: </span><b><span class="fx" style="transform:scaleX(1.03)">4</span></b></span></div>
    <div class="run rn0"><span class="run-id mono b">RUN-2601-001</span><span class="run-date"><span class="fx" id="fx-rd-3" style="transform:scaleX(0.9735)">25 Jan 2026 10:00</span></span><span class="run-n r"><span class="fx" style="transform:scaleX(1.1117)">24 payouts</span></span><span class="run-amt mono">Rp 286M</span>
<span class="run-p"><span class="fx" style="transform:scaleX(1.0539)">Preparation</span></span><span class="run-pc r"><span class="fx" id="fx-pc-4" style="transform:scaleX(1.06)">75%</span></span><div class="bar sm"><i style="width:75%"></i></div></div><div class="run rn1"><span class="run-id mono b">RUN-2601-002</span><span class="run-date"><span class="fx" id="fx-rd-5" style="transform:scaleX(0.9735)">28 Jan 2026 10:00</span></span><span class="run-n r"><span class="fx" style="transform:scaleX(1.0743)">18 payouts</span></span><span class="run-amt mono">Rp 195M</span>
<span class="run-p"><span class="fx" style="transform:scaleX(1.0539)">Preparation</span></span><span class="run-pc r"><span class="fx" id="fx-pc-6" style="transform:scaleX(1.06)">0%</span></span><div class="bar sm"><i style="width:0%"></i></div></div><div class="run rn2"><span class="run-id mono b">RUN-2601-003</span><span class="run-date"><span class="fx" id="fx-rd-7" style="transform:scaleX(0.9587)">31 Jan 2026 10:00</span></span><span class="run-n r"><span class="fx" style="transform:scaleX(1.0976)">32 payouts</span></span><span class="run-amt mono">Rp 413M</span>
<span class="run-p"><span class="fx" style="transform:scaleX(1.0539)">Preparation</span></span><span class="run-pc r"><span class="fx" id="fx-pc-8" style="transform:scaleX(1.06)">0%</span></span><div class="bar sm"><i style="width:0%"></i></div></div><div class="run rn3"><span class="run-id mono b">RUN-2601-004</span><span class="run-date"><span class="fx" id="fx-rd-9" style="transform:scaleX(1.06)">03 Feb 2026 10:00</span></span><span class="run-n r"><span class="fx" style="transform:scaleX(1.03)">15 payouts</span></span><span class="run-amt mono">Rp 162M</span>
<span class="run-p"><span class="fx" style="transform:scaleX(1.0539)">Preparation</span></span><span class="run-pc r"><span class="fx" id="fx-pc-10" style="transform:scaleX(1.06)">0%</span></span><div class="bar sm"><i style="width:0%"></i></div></div>
    <div class="sbar2"><i></i></div>
  </div>
</div>
<div class="card C">
  <div class="chb"><div class="h1"><span class="fx" style="transform:scaleX(1.0857)">Disbursement record</span></div><div class="sub"><span class="fx" style="transform:scaleX(1.0581)">Detailed view of a single payout record.</span></div><span class="chip c-blue "><span class="fx" style="transform:scaleX(1.1041);margin:0 1.51px">DETAIL</span></span></div>
  <div class="tile DT">
    <span class="t-label dl r1"><span class="fx" id="fx-dt-11" style="transform:scaleX(1.0035)">Reference ID</span></span><span class="fv mono b r1v">REF-2601-002</span>
    <span class="t-label dl c2x r1"><span class="fx" id="fx-dt-12" style="transform:scaleX(1.0585)">Payout status</span></span><span class="chip c-green dtc"><span class="fx" style="transform:scaleX(1.1043);margin:0 2.43px">APPROVED</span></span>
    <span class="t-label dl r2"><span class="fx" style="transform:scaleX(1.0536)">Payee name</span></span><span class="fv fs r2v"><span class="fx" style="transform:scaleX(1.0798)">PT. Sejahtera Motor</span></span>
    <span class="t-label dl c2x r2"><span class="fx" style="transform:scaleX(1.0402)">Bank reference</span></span><span class="fv mono b c2x r2v">BCA-2026-012345</span>
    <span class="t-label dl r3"><span class="fx" id="fx-dt-13" style="transform:scaleX(1.0861)">Account number</span></span><span class="fv mono b r3v">123-456-7890</span>
    <span class="t-label dl c2x r3"><span class="fx" style="transform:scaleX(1.06)">Payout amount</span></span><span class="fv mono b c2x r3v">Rp 45M</span>
    <span class="t-label dl r4"><span class="fx" style="transform:scaleX(1.0569)">Bank name</span></span><span class="fv fs r4v"><span class="fx" style="transform:scaleX(1.0864)">Bank Central Asia</span></span>
    <span class="t-label dl c2x r4"><span class="fx" style="transform:scaleX(1.06)">Scheduled date</span></span><span class="fv fs fd c2x r4v"><span class="fx" id="fx-fd-14" style="transform:scaleX(1.1642)">25 Jan 2026</span></span>
  </div>
  <div class="card in AT">
    <div class="ch3"><div class="h3"><span class="fx" style="transform:scaleX(1.0424)">Audit trail</span></div></div>
    <div class="au au0"><i></i><div class="au-t"><span class="fx" style="transform:scaleX(1.069)">Request created</span></div><div class="au-s"><span class="fx" style="transform:scaleX(1.0074)">22 Jan 2026 09:15 by System</span></div></div><div class="au au1"><i></i><div class="au-t"><span class="fx" style="transform:scaleX(1.0788)">Submitted for approval</span></div><div class="au-s"><span class="fx" style="transform:scaleX(1.0131)">22 Jan 2026 09:20 by C. Lestari</span></div></div><div class="au au2"><i></i><div class="au-t"><span class="fx" style="transform:scaleX(1.025)">Level 1 approved</span></div><div class="au-s"><span class="fx" style="transform:scaleX(0.9807)">22 Jan 2026 11:30 by B. Santoso</span></div></div><div class="au au3"><i></i><div class="au-t"><span class="fx" style="transform:scaleX(1.0502)">Level 2 approved</span></div><div class="au-s"><span class="fx" style="transform:scaleX(1.06)">22 Jan 2026 14:30 by D. Wijaya</span></div></div>
  </div>
</div>
</div></div>
<div class="panel p2"><div class="page">
<div class="sliver"></div>
<div class="card H">
  <div class="ch2 hh"><div class="h1"><span class="fx" style="transform:scaleX(1.0929)">Recent disbursement activity</span></div><div class="sub"><span class="fx" style="transform:scaleX(1.0705)">Latest completed and processed payouts.</span></div><div class="ch2-r"><span class="chip c-green "><span class="fx" style="transform:scaleX(1.1514);margin:0 2.74px">HISTORY</span></span><span class="rows nofit">Rows: <b>8</b></span></div></div>
  <div class="tbl hs"><div class="tr th"><span class="c1"><span class="fx" style="transform:scaleX(1.0173)">Reference ID</span></span><span class="c2"><span class="fx" style="transform:scaleX(1.0832)">Payee name</span></span><span class="c3"><span class="fx" style="transform:scaleX(1.0301)">Bank</span></span><span class="c4"><span class="fx" style="transform:scaleX(1.0504)">Account number</span></span><span class="c5"><span class="fx" style="transform:scaleX(1.0711)">Amount</span></span><span class="c6"><span class="fx" style="transform:scaleX(1.0403)">Payout status</span></span><span class="c7"><span class="fx" style="transform:scaleX(1.0527)">Release date</span></span><span class="c8"><span class="fx" style="transform:scaleX(1.0303)">Processing time</span></span></div><div class="tr"><span class="c1 mono b">REF-2600-089</span><span class="c2"><span class="fx" style="transform:scaleX(1.0051)">PT. Maju Jaya</span></span><span class="c3"><span class="fx" style="transform:scaleX(0.9554)">BCA</span></span><span class="c4 mono">987-654-3210</span><span class="c5 mono b">Rp 29M</span><span class="c6"><span class="chip c-green bd"><span class="fx" style="transform:scaleX(1.1001);margin:0 2.61px">COMPLETED</span></span></span><span class="c7"><span class="fx" style="transform:scaleX(0.9848)">15 Jan 2026</span></span><span class="c8"><span class="fx" style="transform:scaleX(1.0696)">3 days</span></span></div><div class="tr"><span class="c1 mono b">REF-2600-088</span><span class="c2"><span class="fx" style="transform:scaleX(1.0384)">CV. Berkah Abadi</span></span><span class="c3"><span class="fx" style="transform:scaleX(1.0858)">Mandiri</span></span><span class="c4 mono">111-222-3333</span><span class="c5 mono b">Rp 12M</span><span class="c6"><span class="chip c-green bd"><span class="fx" style="transform:scaleX(1.1001);margin:0 2.61px">COMPLETED</span></span></span><span class="c7"><span class="fx" style="transform:scaleX(0.9848)">14 Jan 2026</span></span><span class="c8"><span class="fx" style="transform:scaleX(1.0593)">2 days</span></span></div><div class="tr"><span class="c1 mono b">REF-2600-087</span><span class="c2"><span class="fx" style="transform:scaleX(1.0136)">PT. Sentosa Sejahtera</span></span><span class="c3"><span class="fx" style="transform:scaleX(0.919)">BNI</span></span><span class="c4 mono">444-555-6666</span><span class="c5 mono b">Rp 68M</span><span class="c6"><span class="chip c-green bd"><span class="fx" style="transform:scaleX(1.1001);margin:0 2.61px">COMPLETED</span></span></span><span class="c7"><span class="fx" style="transform:scaleX(0.9739)">13 Jan 2026</span></span><span class="c8"><span class="fx" style="transform:scaleX(1.0799)">4 days</span></span></div><div class="tr"><span class="c1 mono b">REF-2600-086</span><span class="c2"><span class="fx" style="transform:scaleX(1.0018)">UD. Teknik Mandiri</span></span><span class="c3"><span class="fx" style="transform:scaleX(0.9554)">BCA</span></span><span class="c4 mono">777-888-9999</span><span class="c5 mono b">Rp 19M</span><span class="c6"><span class="chip c-green bd"><span class="fx" style="transform:scaleX(1.1001);margin:0 2.61px">COMPLETED</span></span></span><span class="c7"><span class="fx" style="transform:scaleX(0.9739)">12 Jan 2026</span></span><span class="c8"><span class="fx" style="transform:scaleX(1.0593)">2 days</span></span></div><div class="tr"><span class="c1 mono b">REF-2600-085</span><span class="c2"><span class="fx" style="transform:scaleX(1.0245)">PT. Global Transport</span></span><span class="c3"><span class="fx" style="transform:scaleX(0.8633)">BRI</span></span><span class="c4 mono">000-111-2222</span><span class="c5 mono b">Rp 36M</span><span class="c6"><span class="chip c-green bd"><span class="fx" style="transform:scaleX(1.1001);margin:0 2.61px">COMPLETED</span></span></span><span class="c7"><span class="fx" style="transform:scaleX(0.9445)">11 Jan 2026</span></span><span class="c8"><span class="fx" style="transform:scaleX(1.0696)">3 days</span></span></div><div class="tr"><span class="c1 mono b">REF-2600-084</span><span class="c2"><span class="fx" style="transform:scaleX(1.0592)">CV. Cahaya Harapan</span></span><span class="c3"><span class="fx" style="transform:scaleX(1.0858)">Mandiri</span></span><span class="c4 mono">333-444-5555</span><span class="c5 mono b">Rp 9M</span><span class="c6"><span class="chip c-green bd"><span class="fx" style="transform:scaleX(1.1001);margin:0 2.61px">COMPLETED</span></span></span><span class="c7"><span class="fx" style="transform:scaleX(0.9848)">10 Jan 2026</span></span><span class="c8"><span class="fx" style="transform:scaleX(0.9796)">1 day</span></span></div><div class="tr"><span class="c1 mono b">REF-2600-083</span><span class="c2"><span class="fx" style="transform:scaleX(1.0174)">PT. Nusantara Logistics</span></span><span class="c3"><span class="fx" style="transform:scaleX(0.9554)">BCA</span></span><span class="c4 mono">666-777-8888</span><span class="c5 mono b">Rp 52M</span><span class="c6"><span class="chip c-green bd"><span class="fx" style="transform:scaleX(1.1001);margin:0 2.61px">COMPLETED</span></span></span><span class="c7"><span class="fx" style="transform:scaleX(1.038)">09 Jan 2026</span></span><span class="c8"><span class="fx" style="transform:scaleX(1.0799)">4 days</span></span></div><div class="tr"><span class="c1 mono b">REF-2600-082</span><span class="c2"><span class="fx" style="transform:scaleX(0.9765)">UD. Sumber Rejeki</span></span><span class="c3"><span class="fx" style="transform:scaleX(0.919)">BNI</span></span><span class="c4 mono">999-000-1111</span><span class="c5 mono b">Rp 15M</span><span class="c6"><span class="chip c-green bd"><span class="fx" style="transform:scaleX(1.1001);margin:0 2.61px">COMPLETED</span></span></span><span class="c7"><span class="fx" style="transform:scaleX(1.038)">08 Jan 2026</span></span><span class="c8"><span class="fx" style="transform:scaleX(1.0593)">2 days</span></span></div></div>
</div>
</div></div>
</body></html>
